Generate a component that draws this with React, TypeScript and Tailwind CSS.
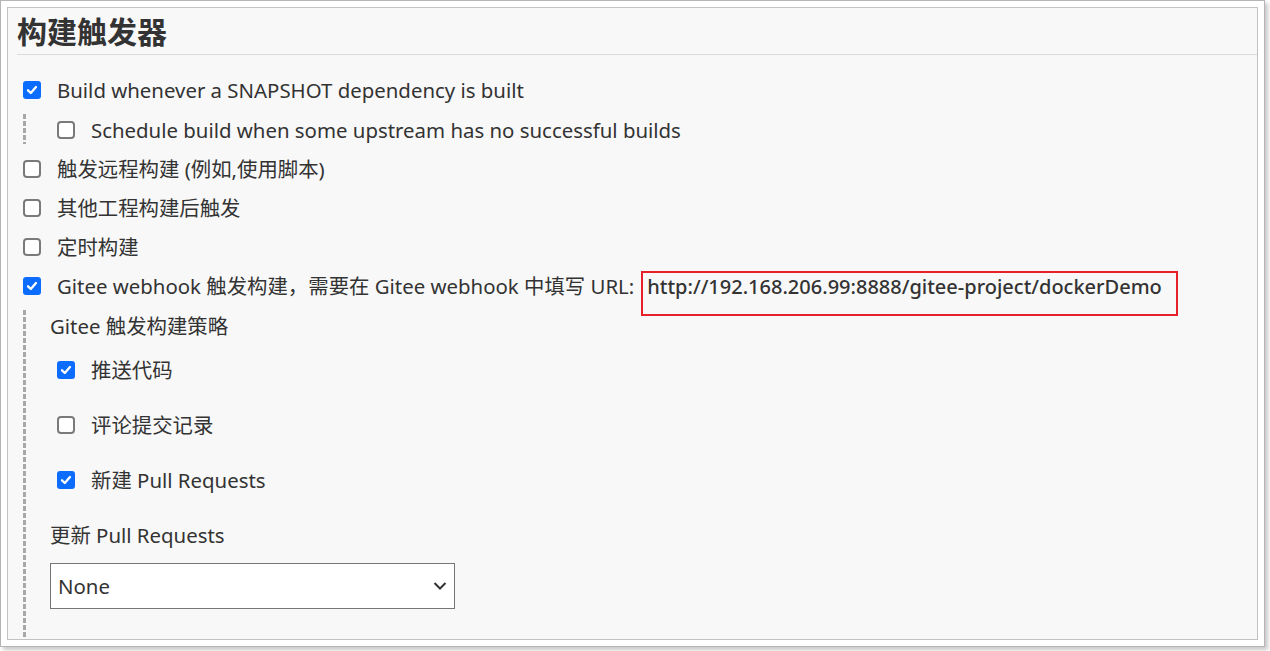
import React from "react";

const font = { fontFamily: '"Noto Sans", "Noto Sans CJK SC", sans-serif' };

function Box({ checked }: { checked?: boolean }) {
  if (checked) {
    return (
      <div className="w-[18px] h-[18px] rounded-[3px] bg-[#0b6cfd] flex items-center justify-center shrink-0">
        <svg width="12" height="12" viewBox="0 0 12 12">
          <path d="M2 6.3 L4.8 9 L10 3" fill="none" stroke="white" strokeWidth="2.3" strokeLinecap="round" strokeLinejoin="round" />
        </svg>
      </div>
    );
  }
  return <div className="w-[18px] h-[18px] rounded-[4px] border-2 border-[#7a7a7a] bg-white shrink-0" />;
}

function Dash({ className }: { className: string }) {
  return (
    <div
      className={`w-[3px] shrink-0 bg-[repeating-linear-gradient(to_bottom,#a8a8a8_0px,#a8a8a8_5px,transparent_5px,transparent_7px)] ${className}`}
    />
  );
}

function Row({ checked, children, h }: { checked?: boolean; children: React.ReactNode; h: string }) {
  return (
    <div className={`flex items-center gap-[16px] pl-[15px] ${h}`}>
      <Box checked={checked} />
      <span className="whitespace-nowrap">{children}</span>
    </div>
  );
}

export default function App() {
  return (
    <div className="w-[1270px] h-[651px] bg-white" style={font}>
      <div className="w-[1265px] h-[647px] border border-[#b5b5b5] bg-white p-[6px] shadow-[3px_3px_4px_rgba(0,0,0,0.22)]">
        <div className="w-full h-full border border-[#c2c2c2] bg-[#f8f8f8] text-[#333] text-[20.4px] leading-[28px] overflow-hidden">
          <div className="ml-[9px] h-[47px] border-b border-[#dcdcdc] text-[30px] font-bold leading-[36px] pt-[6px]">
            构建触发器
          </div>
          <div className="mt-[15px]">
            <Row checked h="h-[40px]">Build whenever a SNAPSHOT dependency is built</Row>
            <div className="flex items-center h-[39px]">
              <Dash className="ml-[15px] h-[30px] -mt-[2px]" />
              <div className="flex items-center gap-[16px] pl-[31px]">
                <Box />
                <span className="whitespace-nowrap">Schedule build when some upstream has no successful builds</span>
              </div>
            </div>
            <Row h="h-[39px]">触发远程构建 (例如,使用脚本)</Row>
            <Row h="h-[39px]">其他工程构建后触发</Row>
            <Row h="h-[39px]">定时构建</Row>
            <div className="flex items-center gap-[16px] pl-[15px] h-[40px]">
              <Box checked />
              <span className="whitespace-nowrap">
                Gitee webhook 触发构建，需要在 Gitee webhook 中填写 URL:
                <span className="relative ml-[13px] font-medium text-[20px]">
                  http://192.168.206.99:8888/gitee-project/dockerDemo
                  <span className="absolute left-[-6px] top-[-2px] w-[537px] h-[45px] border-2 border-[#e8202a]" />
                </span>
              </span>
            </div>
            <div className="flex mt-[4px] h-[400px]">
              <Dash className="ml-[15px] self-stretch" />
              <div className="pl-[24px]">
                <div className="h-[32px] flex items-center whitespace-nowrap">Gitee 触发构建策略</div>
                <div className="pl-[7px]">
                  <div className="h-[55px] flex items-center gap-[16px]"><Box checked /><span>推送代码</span></div>
                  <div className="h-[55px] flex items-center gap-[16px]"><Box /><span>评论提交记录</span></div>
                  <div className="h-[55px] flex items-center gap-[16px]"><Box checked /><span>新建 Pull Requests</span></div>
                </div>
                <div className="h-[56px] flex items-center whitespace-nowrap">更新 Pull Requests</div>
                <div className="w-[405px] h-[46px] border border-[#767676] bg-white flex items-center justify-between pl-[7px] pr-[7px]">
                  <span>None</span>
                  <svg width="14" height="10" viewBox="0 0 14 10">
                    <path d="M1.5 2 L7 7.5 L12.5 2" fill="none" stroke="#333" strokeWidth="2" />
                  </svg>
                </div>
              </div>
            </div>
          </div>
        </div>
      </div>
    </div>
  );
}
